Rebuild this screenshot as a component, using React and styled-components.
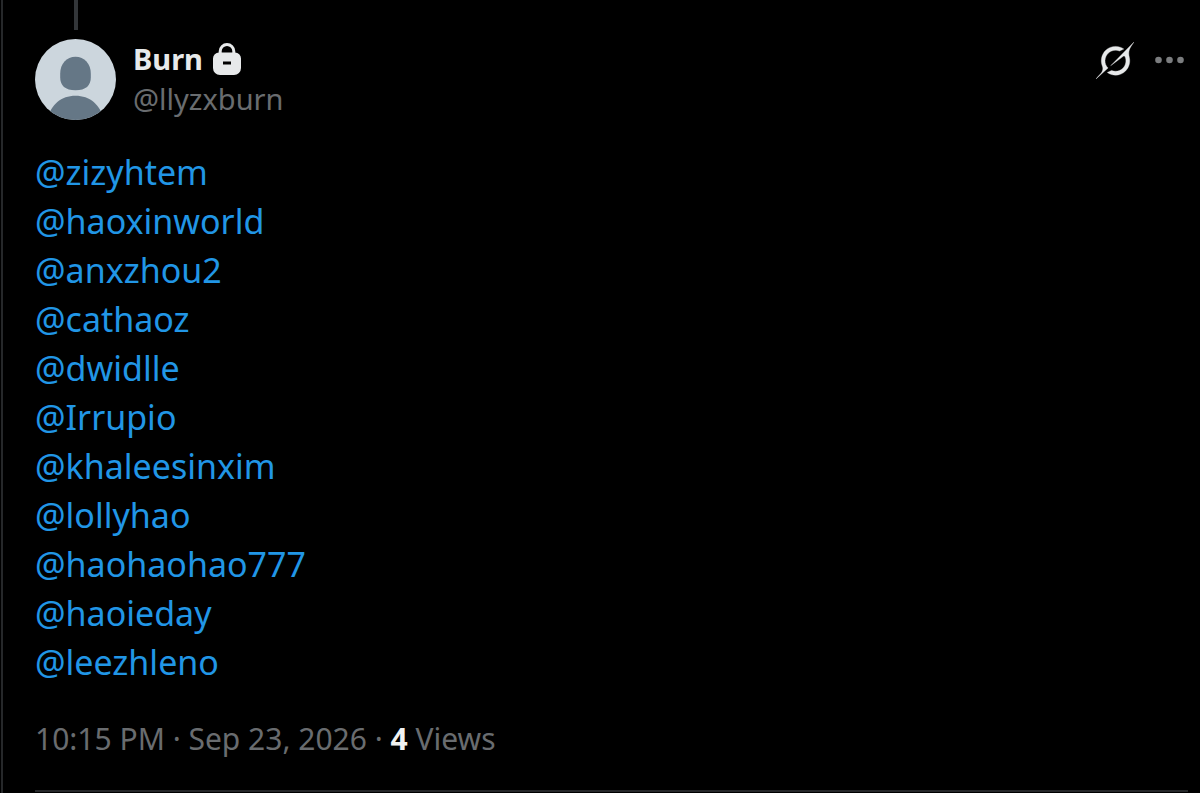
import React from 'react';
import styled, { createGlobalStyle } from 'styled-components';

const GlobalStyle = createGlobalStyle`
  * { box-sizing: border-box; }
  body {
    margin: 0;
    background: #000;
    color: #e7e9ea;
    font-family: "Noto Sans", "Liberation Sans", sans-serif;
  }
`;

const Column = styled.main`
  margin-left: 1px;
  border-left: 2px solid #26282a;
  padding: 0 12px 1px 32px;
`;

const ThreadLine = styled.div`
  width: 4px;
  height: 30px;
  margin: 0 0 9px 39px;
  background: #333639;
`;

const Header = styled.header`
  display: flex;
  align-items: flex-start;
  gap: 17px;
`;

const Avatar = styled.svg`
  display: block;
  flex: none;
  width: 81px;
  height: 81px;
`;

const Identity = styled.div`
  display: flex;
  flex-direction: column;
  flex: 1;
  min-width: 0;
`;

const NameRow = styled.div`
  display: flex;
  align-items: center;
  gap: 10px;
  height: 40px;
`;

const Name = styled.a`
  color: #e7e9ea;
  font-size: 29px;
  line-height: 40px;
  font-weight: 700;
  text-decoration: none;
`;

const LockIcon = styled.svg`
  display: block;
  width: 28px;
  height: 32px;
`;

const Handle = styled.a`
  align-self: flex-start;
  color: #696c6f;
  font-size: 29px;
  line-height: 40px;
  text-decoration: none;
`;

const Actions = styled.div`
  display: flex;
  align-items: center;
  gap: 20px;
  height: 42px;
`;

const IconButton = styled.button`
  display: block;
  padding: 0;
  border: 0;
  background: none;
  color: ${(p) => (p.$muted ? '#7b7d7f' : '#e7e9ea')};
  cursor: pointer;

  svg { display: block; }
`;

const Mentions = styled.div`
  display: flex;
  flex-direction: column;
  align-items: flex-start;
  margin-top: 28px;
`;

const Mention = styled.a`
  color: #2196e6;
  font-size: 34px;
  line-height: 49px;
  text-decoration: none;
`;

const Meta = styled.footer`
  margin-top: 31px;
  padding-bottom: 30px;
  border-bottom: 2px solid #26282a;
  color: #696c6f;
  font-size: 30px;
  line-height: 42px;
`;

const MetaLink = styled.a`
  color: inherit;
  text-decoration: none;
`;

const Count = styled.strong`
  color: #f1f2f2;
  font-weight: 700;
`;

const handles = [
  'zizyhtem',
  'haoxinworld',
  'anxzhou2',
  'cathaoz',
  'dwidlle',
  'Irrupio',
  'khaleesinxim',
  'lollyhao',
  'haohaohao777',
  'haoieday',
  'leezhleno',
];

export default function App() {
  return (
    <>
      <GlobalStyle />
      <Column>
        <ThreadLine />
        <article>
          <Header>
            <Avatar viewBox="0 0 82 82" aria-hidden="true">
              <clipPath id="disc"><circle cx="41" cy="41" r="41" /></clipPath>
              <g clipPath="url(#disc)">
                <rect width="82" height="82" fill="#ccd6dd" />
                <path fill="#657786" d="M41 18c9 0 15.500 7 15.500 17v4c0 8-5 13-15.500 13s-15.500-5-15.500-13v-4c0-10 6.500-17 15.500-17z" />
                <path fill="#657786" d="M12 84c3-17 14-26.500 29-26.500s26 9.500 29 26.500z" />
              </g>
            </Avatar>
            <Identity>
              <NameRow>
                <Name href="#profile">Burn</Name>
                <LockIcon viewBox="0 0 28 32" role="img" aria-label="Protected account">
                  <path d="M7.200 13V8.300a6.800 6.800 0 0 1 13.600 0V13" fill="none" stroke="#e7e9ea" strokeWidth="3" />
                  <path fillRule="evenodd" fill="#e7e9ea" d="M6 9.500h16a6 6 0 0 1 6 6V25a7 7 0 0 1-7 7H7a7 7 0 0 1-7-7v-9.500a6 6 0 0 1 6-6zM10 18.500v3h8v-3z" />
                </LockIcon>
              </NameRow>
              <Handle href="#profile">@llyzxburn</Handle>
            </Identity>
            <Actions>
              <IconButton type="button" aria-label="Grok actions">
                <svg width="38" height="37" viewBox="0 0 33 32" fill="currentColor" stroke="currentColor" strokeWidth="0.300">
                  <path d="M12.745 20.54l10.97-8.19c.539-.4 1.307-.244 1.564.38 1.349 3.288.746 7.241-1.938 9.955-2.683 2.714-6.417 3.31-9.83 1.954l-3.728 1.745c5.347 3.697 11.84 2.782 15.898-1.324 3.219-3.255 4.216-7.692 3.284-11.693l.008.009c-1.351-5.878.332-8.227 3.782-13.031L33 0l-4.54 4.59v-.014L12.743 20.544m-2.263 1.987c-3.837-3.707-3.175-9.446.1-12.755 2.42-2.449 6.388-3.448 9.852-1.979l3.72-1.737c-.67-.49-1.53-1.017-2.515-1.387-4.455-1.854-9.789-.931-13.41 2.728-3.483 3.523-4.579 8.94-2.697 13.561 1.405 3.454-.899 5.898-3.22 8.364C1.49 30.2.666 31.074 0 32l10.478-9.466" />
                </svg>
              </IconButton>
              <IconButton type="button" aria-label="More" $muted>
                <svg width="34" height="32" viewBox="0 0 34 32" fill="currentColor">
                  <circle cx="4.500" cy="16" r="3.300" />
                  <circle cx="15.500" cy="16" r="3.300" />
                  <circle cx="26.500" cy="16" r="3.300" />
                </svg>
              </IconButton>
            </Actions>
          </Header>
          <Mentions>
            {handles.map((h) => (
              <Mention key={h} href={`#${h}`}>@{h}</Mention>
            ))}
          </Mentions>
          <Meta>
            <MetaLink href="#status"><time dateTime="2026-09-23T22:15">10:15 PM · Sep 23, 2026</time></MetaLink>
            {' · '}
            <Count>4</Count> Views
          </Meta>
        </article>
      </Column>
    </>
  );
}
